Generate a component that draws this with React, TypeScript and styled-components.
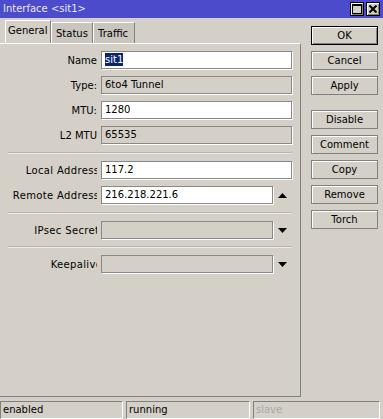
import React from "react";
import styled, { createGlobalStyle } from "styled-components";

const Global = createGlobalStyle`
  html, body { margin: 0; padding: 0; }
  body {
    background: #d4d0c8;
    font-family: "DejaVu Sans", Verdana, sans-serif;
    font-size: 10px;
    color: #000;
  }
`;

const Window = styled.div`
  width: 383px;
  height: 419px;
  background: #d4d0c8;
  display: flex;
  flex-direction: column;
  overflow: hidden;
`;

const TitleBar = styled.div`
  height: 18px;
  background: #4b4bcc;
  display: flex;
  align-items: center;
  padding: 0 3px 0 3px;
  box-sizing: border-box;
`;

const Title = styled.div`
  flex: 1;
  color: #e8e8f0;
  font-size: 10px;
  line-height: 18px;
`;

const TitleButtons = styled.div`
  display: flex;
  gap: 2px;
`;

const TitleButton = styled.div`
  width: 14px;
  height: 14px;
  box-sizing: border-box;
  background: #d4d0c8;
  border: 1px solid #000;
  box-shadow: inset 1px 1px 0 #fff, inset -1px -1px 0 #808080;
  display: flex;
  align-items: center;
  justify-content: center;
`;

const Body = styled.div`
  flex: 1;
  display: flex;
`;

const LeftColumn = styled.div`
  width: 301px;
  display: flex;
  flex-direction: column;
  padding-top: 2px;
`;

const TabStrip = styled.div`
  height: 23px;
  display: flex;
  align-items: flex-end;
  padding-left: 5px;
`;

const Tab = styled.div<{ $active?: boolean }>`
  box-sizing: border-box;
  width: ${(p) => (p.$active ? 46 : 42)}px;
  height: ${(p) => (p.$active ? 23 : 21)}px;
  background: ${(p) => (p.$active ? "#d4d0c8" : "#cac6be")};
  border-top: 1px solid #fff;
  border-left: 1px solid #fff;
  border-right: 1px solid #808080;
  padding: ${(p) => (p.$active ? "4px 0 0 2px" : "5px 0 0 4px")};
  line-height: 12px;
  white-space: nowrap;
`;

const Panel = styled.div`
  height: 354px;
  box-sizing: border-box;
  border-top: 1px solid #fff;
  border-right: 1px solid #808080;
  border-bottom: 1px solid #808080;
  padding: 7px 8px 0 0;
  display: flex;
  flex-direction: column;
`;

const Section = styled.div`
  display: flex;
  flex-direction: column;
  gap: 7px;
`;

const Row = styled.div`
  display: flex;
  align-items: center;
  height: 18px;
`;

const Label = styled.div`
  width: 97px;
  flex: none;
  overflow: hidden;
  display: flex;
  justify-content: flex-end;
  white-space: nowrap;
  margin-right: 4px;
`;

const LabelText = styled.span<{ $overhang?: number; $spread?: boolean }>`
  margin-right: ${(p) => -(p.$overhang || 0)}px;
  letter-spacing: ${(p) => (p.$spread ? "0.35px" : "0")};
  flex: none;
`;

const Field = styled.div<{ $editable?: boolean; $short?: boolean }>`
  box-sizing: border-box;
  width: ${(p) => (p.$short ? 173 : 191)}px;
  height: 18px;
  background: ${(p) => (p.$editable ? "#fff" : "#d4d0c8")};
  border: 1px solid #888;
  box-shadow: 1px 1px 0 #fff;
  padding-left: 3px;
  line-height: 16px;
  white-space: nowrap;
  overflow: hidden;
`;

const Selected = styled.span`
  background: #0a246a;
  color: #fff;
  padding: 1px 0;
`;

const ArrowSlot = styled.div`
  width: 19px;
  display: flex;
  justify-content: center;
  align-items: center;
`;

const Separator = styled.div<{ $top: number; $bottom: number }>`
  height: 1px;
  background: #b8b4ac;
  border-bottom: 1px solid #ecebe8;
  margin: ${(p) => p.$top}px 0 ${(p) => p.$bottom}px 8px;
`;

const RightColumn = styled.div`
  padding: 8px 0 0 10px;
  display: flex;
  flex-direction: column;
`;

const ButtonGroup = styled.div`
  display: flex;
  flex-direction: column;
  gap: 6px;
  margin-bottom: 15px;
`;

const Button = styled.div<{ $default?: boolean }>`
  box-sizing: border-box;
  width: 67px;
  height: 19px;
  background: #d4d0c8;
  border: 1px solid ${(p) => (p.$default ? "#000" : "#808080")};
  box-shadow: ${(p) =>
    p.$default
      ? "inset 1px 1px 0 #fff, inset -1px -1px 0 #808080"
      : "inset 1px 1px 0 #fff"};
  display: flex;
  align-items: center;
  justify-content: center;
  line-height: 12px;
`;

const StatusBar = styled.div`
  height: 18px;
  display: flex;
  gap: 3px;
  margin-top: 3px;
`;

const StatusCell = styled.div<{ $w: number; $dim?: boolean }>`
  box-sizing: border-box;
  width: ${(p) => p.$w}px;
  height: 18px;
  border-top: 1px solid #808080;
  border-left: 1px solid #808080;
  border-bottom: 1px solid #fff;
  border-right: 1px solid #fff;
  padding-left: 2px;
  line-height: 16px;
  color: ${(p) => (p.$dim ? "#a9a9a9" : "#000")};
`;

const Arrow = ({ up }: { up?: boolean }) => (
  <svg width="9" height="5" viewBox="0 0 9 5">
    {up ? <polygon points="0,5 9,5 4.5,0" fill="#000" /> : <polygon points="0,0 9,0 4.5,5" fill="#000" />}
  </svg>
);

export default function App() {
  return (
    <Window>
      <Global />
      <TitleBar>
        <Title>Interface &lt;sit1&gt;</Title>
        <TitleButtons>
          <TitleButton>
            <svg width="10" height="10" viewBox="0 0 10 10">
              <rect x="0.5" y="0.5" width="9" height="9" fill="none" stroke="#000" />
              <rect x="0" y="0" width="10" height="2" fill="#000" />
            </svg>
          </TitleButton>
          <TitleButton>
            <svg width="8" height="8" viewBox="0 0 8 8">
              <path d="M0.5 0.5 L7.5 7.5 M7.5 0.5 L0.5 7.5" stroke="#000" strokeWidth="2" />
            </svg>
          </TitleButton>
        </TitleButtons>
      </TitleBar>
      <Body>
        <LeftColumn>
          <TabStrip>
            <Tab $active>General</Tab>
            <Tab>Status</Tab>
            <Tab>Traffic</Tab>
          </TabStrip>
          <Panel>
            <Section>
              <Row>
                <Label><LabelText>Name</LabelText></Label>
                <Field $editable><Selected>sit1</Selected></Field>
              </Row>
              <Row>
                <Label><LabelText>Type:</LabelText></Label>
                <Field>6to4 Tunnel</Field>
              </Row>
              <Row>
                <Label><LabelText>MTU:</LabelText></Label>
                <Field $editable>1280</Field>
              </Row>
              <Row>
                <Label><LabelText>L2 MTU</LabelText></Label>
                <Field>65535</Field>
              </Row>
            </Section>
            <Separator $top={8} $bottom={7} />
            <Section>
              <Row>
                <Label><LabelText $spread $overhang={6}>Local Address:</LabelText></Label>
                <Field $editable>117.2</Field>
              </Row>
              <Row>
                <Label><LabelText $spread $overhang={6}>Remote Address:</LabelText></Label>
                <Field $editable $short>216.218.221.6</Field>
                <ArrowSlot><Arrow up /></ArrowSlot>
              </Row>
            </Section>
            <Separator $top={8} $bottom={7} />
            <Section>
              <Row>
                <Label><LabelText $spread $overhang={6}>IPsec Secret:</LabelText></Label>
                <Field $short />
                <ArrowSlot><Arrow /></ArrowSlot>
              </Row>
            </Section>
            <Separator $top={7} $bottom={7} />
            <Section>
              <Row>
                <Label><LabelText $spread $overhang={9}>Keepalive:</LabelText></Label>
                <Field $short />
                <ArrowSlot><Arrow /></ArrowSlot>
              </Row>
            </Section>
          </Panel>
        </LeftColumn>
        <RightColumn>
          <ButtonGroup>
            <Button $default>OK</Button>
            <Button>Cancel</Button>
            <Button>Apply</Button>
          </ButtonGroup>
          <ButtonGroup>
            <Button>Disable</Button>
            <Button>Comment</Button>
            <Button>Copy</Button>
            <Button>Remove</Button>
            <Button>Torch</Button>
          </ButtonGroup>
        </RightColumn>
      </Body>
      <StatusBar>
        <StatusCell $w={123}>enabled</StatusCell>
        <StatusCell $w={124}>running</StatusCell>
        <StatusCell $w={127} $dim>slave</StatusCell>
      </StatusBar>
    </Window>
  );
}
